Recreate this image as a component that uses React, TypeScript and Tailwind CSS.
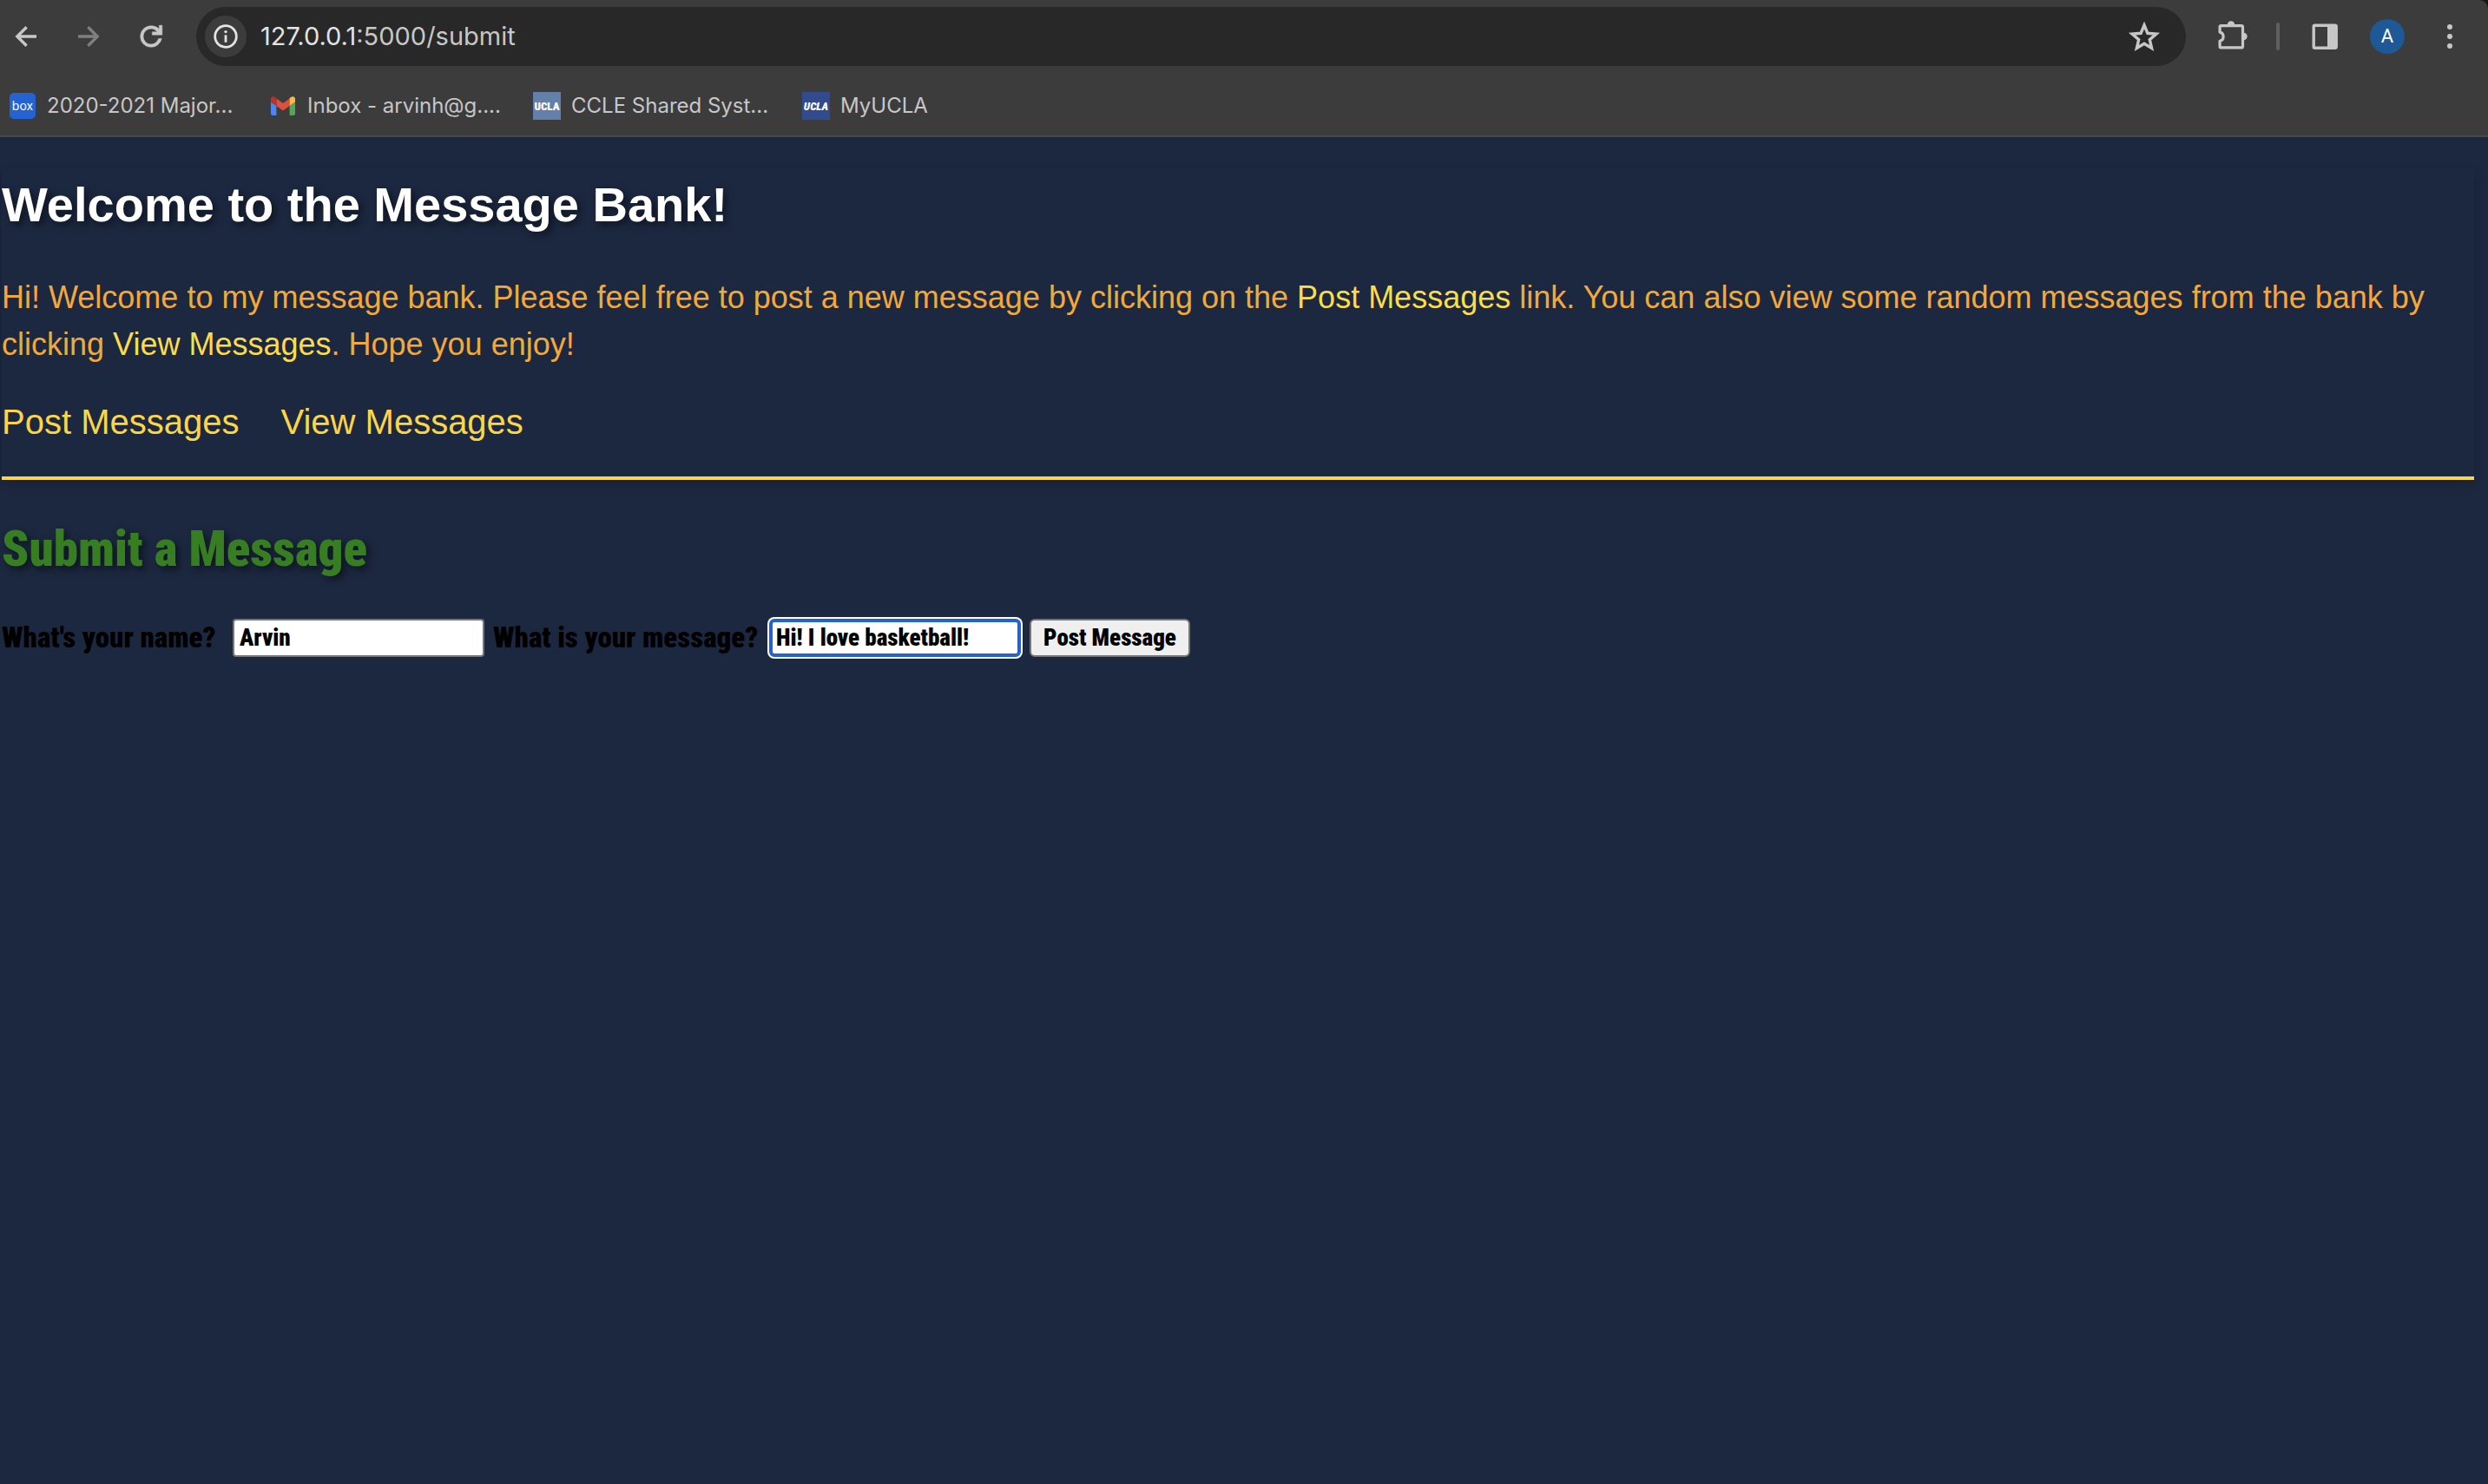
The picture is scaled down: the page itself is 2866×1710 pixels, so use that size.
import type { ReactNode } from "react";

const stencil = "font-['Roboto_Condensed','Roboto',sans-serif] font-black";

function IconButton({ label, children }: { label: string; children: ReactNode }) {
  return (
    <button type="button" aria-label={label} className="flex size-14 shrink-0 items-center justify-center rounded-full">
      {children}
    </button>
  );
}

function Bookmark({ text, width, icon }: { text: string; width: string; icon: ReactNode }) {
  return (
    <a href="#" className={`flex shrink-0 items-center gap-3 whitespace-nowrap ${width}`}>
      <span className="flex size-8 shrink-0 items-center justify-center">{icon}</span>
      {text}
    </a>
  );
}

function BackArrow({ className }: { className?: string }) {
  return (
    <svg viewBox="0 0 36 36" className={`size-9 ${className ?? ""}`} fill="none" stroke="currentColor" strokeWidth="3.4">
      <path d="M18.6 7.2 7.8 18l10.8 10.8M8 18h22" />
    </svg>
  );
}

function Toolbar() {
  return (
    <div className="flex h-[84px] items-center pr-4 pl-0.5 text-[#c7c7c7]">
      <div className="flex gap-4">
        <IconButton label="Back">
          <BackArrow />
        </IconButton>
        <IconButton label="Forward">
          <BackArrow className="rotate-180 text-[#7f7f7f]" />
        </IconButton>
        <IconButton label="Reload">
          <svg viewBox="0 0 24 24" className="size-10" fill="currentColor" stroke="currentColor" strokeWidth="0.3">
            <path d="M12 19.4q-3.1 0-5.25-2.15T4.6 12t2.15-5.25T12 4.6q1.725 0 3.3.713T17.6 6.9V4.3h2.1v6.6h-6.9V8.9h3.5q-.8-1.1-1.9-1.7T12 6.6Q9.75 6.6 8.17 8.17T6.6 12t1.57 3.83T12 17.4q1.75 0 3.15-1T17.2 13.5h2.2q-.7 2.65-2.7 4.28T12 19.4" />
          </svg>
        </IconButton>
      </div>
      <div className="ml-6 flex h-[68px] min-w-0 flex-1 items-center gap-4 rounded-full bg-[#282828] pr-7 pl-2.5">
        <button type="button" aria-label="Site information" className="flex size-12 items-center justify-center rounded-full bg-[#3c3c3c] text-[#e3e3e3]">
          <svg viewBox="0 0 32 32" className="size-8" fill="none" stroke="currentColor" strokeWidth="2.8">
            <circle cx="16" cy="16" r="12.3" />
            <path d="M16 14.4v8.4" />
            <circle cx="16" cy="10.6" r="1.7" fill="currentColor" stroke="none" />
          </svg>
        </button>
        <div className="flex-1 text-[29px] leading-9 text-[#e3e3e3]">
          127.0.0.1<span className="text-[#c7c7c7]">:5000/submit</span>
        </div>
        <button type="button" aria-label="Bookmark this page" className="flex size-10 items-center justify-center">
          <svg viewBox="0 0 40 40" className="size-10" fill="none" stroke="currentColor" strokeWidth="3.4">
            <path d="m20 7 3.9 9.3 10 .8-7.6 6.6 2.3 9.8-8.6-5.2-8.6 5.2 2.3-9.8-7.6-6.6 10-.8z" />
          </svg>
        </button>
      </div>
      <div className="ml-[26px] flex items-center gap-[22px]">
        <IconButton label="Extensions">
          <svg viewBox="0 0 40 40" className="size-10" fill="none" stroke="currentColor" strokeWidth="3.2" strokeLinejoin="round">
            <path d="M6.600 7.600h23.400q1.500 0 1.500 1.500v22.300q0 1.500-1.500 1.500H6.600q-1.500 0-1.500-1.500v-6.200c2.600-.5 4-2.700 4-5s-1.400-4.600-4-5.100v-6q0-1.500 1.500-1.500z" />
            <path d="M13.700 6.500a4.300 4.300 0 0 1 8.600 0zM32.500 15.800a4.200 4.200 0 0 1 0 8.400z" fill="currentColor" stroke="none" />
          </svg>
        </IconButton>
        <div className="mr-0.5 h-8 w-1 rounded-full bg-[#5f5f5f]" />
        <div className="flex gap-4">
          <IconButton label="Side panel">
            <svg viewBox="0 0 40 40" className="size-10" fill="none" stroke="currentColor" strokeWidth="3.4">
              <rect x="7.200" y="7.200" width="26" height="26" rx="1.500" />
              <path d="M23 7h10v26H23z" fill="currentColor" stroke="none" />
            </svg>
          </IconButton>
          <IconButton label="Profile">
            <span className="flex size-10 items-center justify-center rounded-full bg-[#1f5896] font-[Roboto,sans-serif] text-[22px] leading-none text-white">A</span>
          </IconButton>
          <IconButton label="Menu">
            <svg viewBox="0 0 40 40" className="size-10" fill="currentColor">
              <circle cx="20" cy="9" r="3" />
              <circle cx="20" cy="20" r="3" />
              <circle cx="20" cy="31" r="3" />
            </svg>
          </IconButton>
        </div>
      </div>
    </div>
  );
}

function Bookmarks() {
  return (
    <nav aria-label="Bookmarks" className="flex h-[72px] items-center pt-1 pl-2.5 text-2xl text-[#c7c7c7]">
      <Bookmark
        text="2020-2021 Major..."
        width="w-[300px]"
        icon={
          <span className="flex size-[30px] items-center justify-center rounded-[5px] bg-[#2463d1] text-[14px] leading-none text-white">
            box
          </span>
        }
      />
      <Bookmark
        text="Inbox - arvinh@g...."
        width="w-[304px]"
        icon={
          <svg viewBox="0 0 28 22" className="h-[22px] w-7">
            <path d="M0 6.500 6.400 11v11H2a2 2 0 0 1-2-2z" fill="#4c87ee" />
            <path d="M28 6.500 21.600 11v11H26a2 2 0 0 0 2-2z" fill="#57a55b" />
            <path d="m6.400 2.400 7.600 5.700 7.600-5.700V11L14 16.600 6.400 11z" fill="#dd5040" />
            <path d="M0 3C0 .4 2.900-.6 4.900.9l1.500 1.200V11L0 6.500z" fill="#b5352a" />
            <path d="M28 3c0-2.600-2.900-3.600-4.900-2.100l-1.500 1.200V11L28 6.500z" fill="#f4bd42" />
          </svg>
        }
      />
      <Bookmark
        text="CCLE Shared Syst..."
        width="w-[310px]"
        icon={
          <span className="flex size-8 items-center justify-center bg-[#6280a9] font-['Roboto_Condensed',sans-serif] text-[13px] leading-none font-black text-white">
            UCLA
          </span>
        }
      />
      <Bookmark
        text="MyUCLA"
        width="w-[160px]"
        icon={
          <span className="flex size-8 items-center justify-center bg-[#324b8f] font-['Roboto_Condensed',sans-serif] text-[13px] leading-none font-black text-white italic">
            UCLA
          </span>
        }
      />
    </nav>
  );
}

export default function App() {
  return (
    <div className="flex min-h-screen flex-col bg-[#161616] font-[Inter,sans-serif]">
      <header className="rounded-tr-[10px] border-b-2 border-[#474747] bg-[#3c3c3c]">
        <Toolbar />
        <Bookmarks />
      </header>
      <main className="flex-1 bg-[#1c2840] pt-9 pr-4 pl-0.5 font-['Liberation_Sans',Arial,sans-serif]">
        <section className="border-b-4 border-[#fad548] pb-[33px] shadow-[0_4px_12px_rgba(0,0,0,0.2)]">
          <h1 className="text-[56px] leading-[84px] font-bold text-white [text-shadow:4px_4px_8px_rgba(0,0,0,0.5)]">
            Welcome to the Message Bank!
          </h1>
          <p className="mt-[38px] text-4xl leading-[54px] text-[#f3a83c]">
            Hi! Welcome to my message bank. Please feel free to post a new message by clicking on the{" "}
            <a href="#post" className="text-[#fbdc4a]">Post Messages</a> link. You can also view some random messages
            from the bank by clicking <a href="#view" className="text-[#fbdc4a]">View Messages</a>. Hope you enjoy!
          </p>
          <nav aria-label="Messages" className="mt-8 flex gap-12 text-[40px] leading-[60px] text-[#fad548]">
            <a href="#post">Post Messages</a>
            <a href="#view">View Messages</a>
          </nav>
        </section>
        <section className={stencil}>
          <h2 className="mt-[38px] text-[57px] leading-[84px] text-[#377e22] [text-shadow:4px_4px_8px_rgba(0,0,0,0.5)]">
            Submit a Message
          </h2>
          <form className="mt-[38px] flex items-center gap-2.5" onSubmit={(e) => e.preventDefault()}>
            <label htmlFor="name" className="w-64 text-[33px] leading-10 whitespace-nowrap text-black">
              What's your name?
            </label>
            <input
              id="name"
              type="text"
              defaultValue="Arvin"
              className="h-11 w-[290px] rounded-[4px] border-2 border-[#767676] bg-white pl-1.5 text-[27px] text-black"
            />
            <label htmlFor="message" className="w-[308px] text-[33px] leading-10 whitespace-nowrap text-black">
              What is your message?
            </label>
            <input
              id="message"
              type="text"
              defaultValue="Hi! I love basketball!"
              className="h-11 w-[290px] rounded-[6px] border-4 border-[#2463c9] bg-white pl-1 text-[27px] text-black ring-2 ring-white outline-none"
            />
            <button
              type="submit"
              className="h-11 w-[185px] rounded-[6px] border-2 border-[#767676] bg-[#efefef] text-[27px] leading-8 text-black"
            >
              Post Message
            </button>
          </form>
        </section>
      </main>
    </div>
  );
}
